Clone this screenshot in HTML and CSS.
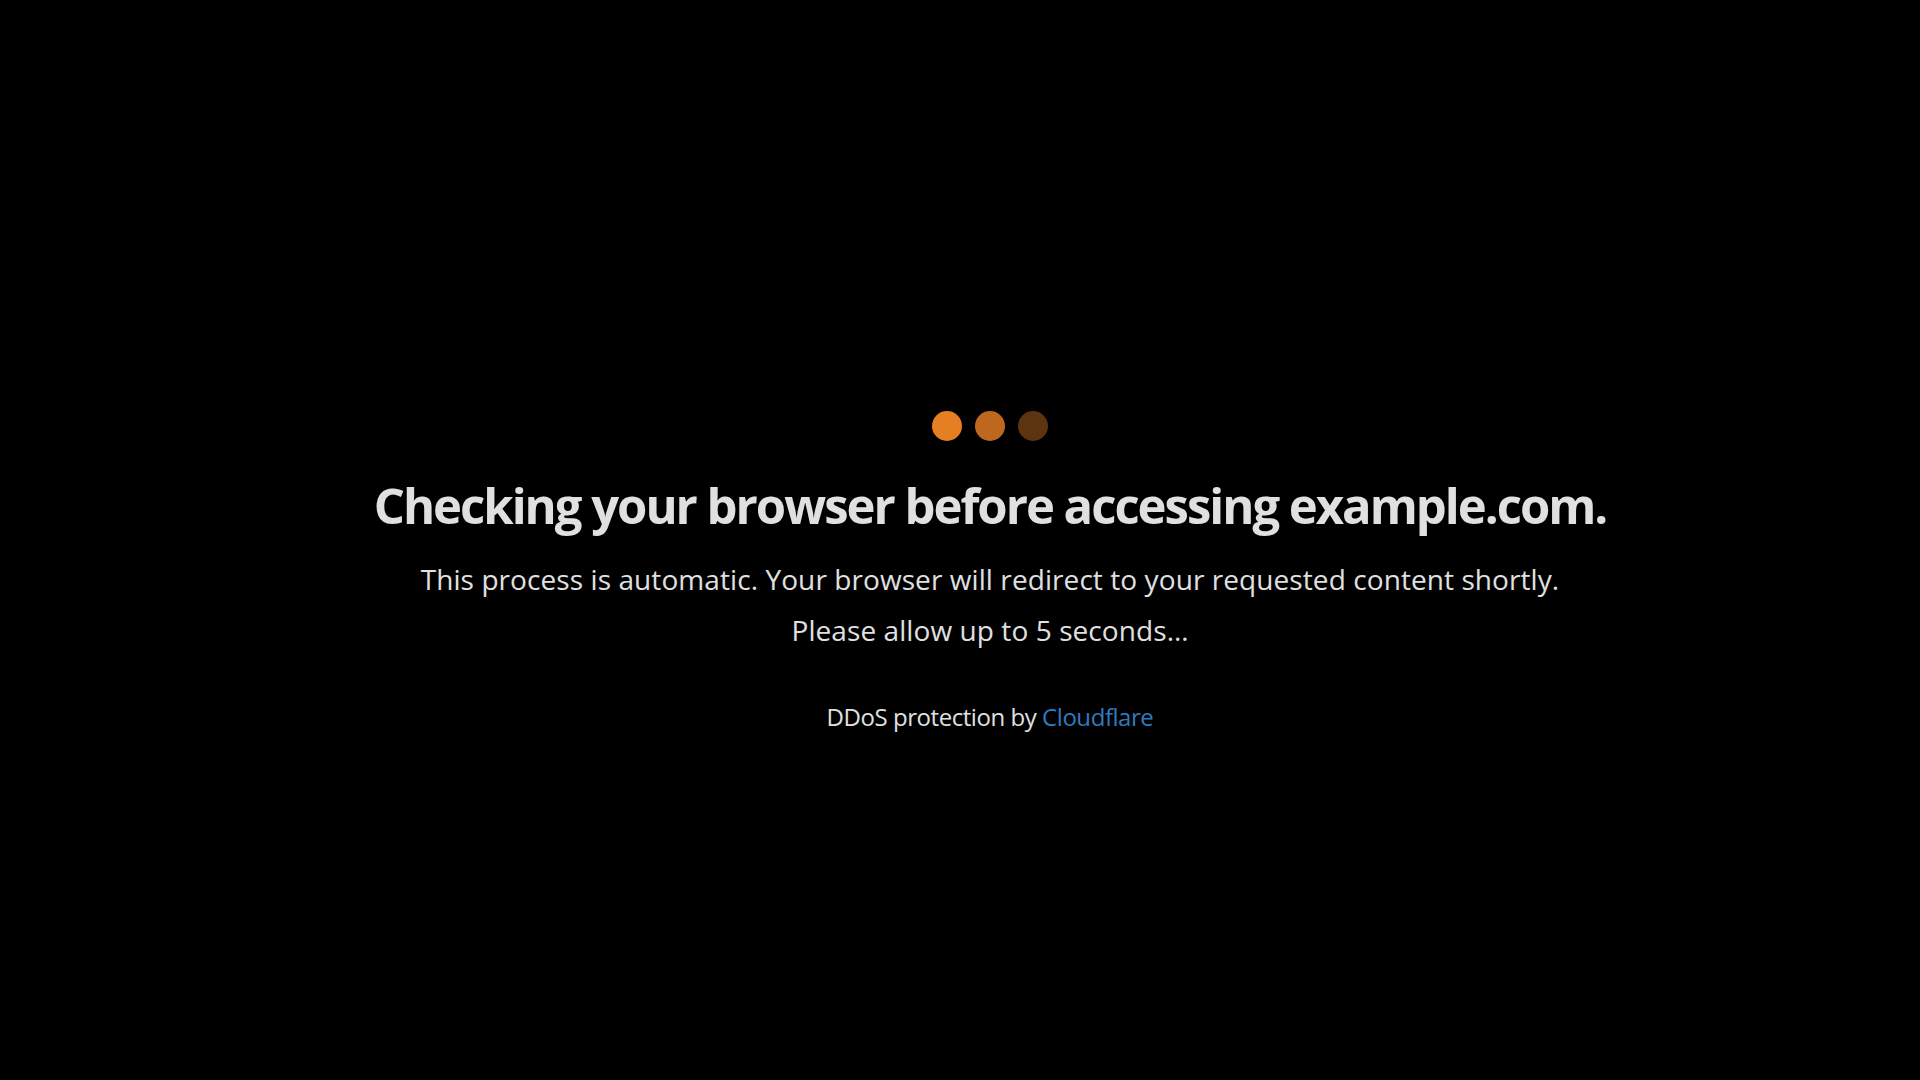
FILE: index.html
```html
<!DOCTYPE html>
<html lang="en">
<head>
<meta charset="utf-8">
<title>Just a moment...</title>
<link rel="stylesheet" href="styles.css">
</head>
<body>
<main class="page">
  <div class="dots">
    <span class="dot dot-1"></span>
    <span class="dot dot-2"></span>
    <span class="dot dot-3"></span>
  </div>
  <h1 class="title">Checking your browser before accessing example.com.</h1>
  <div class="message">
    <p class="line">This process is automatic. Your browser will redirect to your requested content shortly.</p>
    <p class="line">Please allow up to 5 seconds&hellip;</p>
  </div>
  <p class="footer">DDoS protection by <a class="link" href="#">Cloudflare</a></p>
</main>
</body>
</html>
```
FILE: styles.css
```css
html, body {
  margin: 0;
  padding: 0;
  background: #000;
}
body {
  width: 1920px;
  height: 1080px;
  overflow: hidden;
  font-family: "Open Sans", "Noto Sans", sans-serif;
  color: #e0e0e0;
}
.page {
  display: flex;
  flex-direction: column;
  align-items: center;
  padding-top: 411px;
  padding-left: 60px;
}
.dots {
  display: flex;
  gap: 13px;
  height: 30px;
}
.dot {
  width: 30px;
  height: 30px;
  border-radius: 50%;
}
.dot-1 { background: #e67f22; }
.dot-2 { background: #be671e; }
.dot-3 { background: #5d3410; }
.title {
  margin: 34px 0 0;
  font-size: 49px;
  line-height: 60px;
  font-weight: 700;
  letter-spacing: -2px;
  color: #e0e0e0;
}
.message {
  margin-top: 19px;
  text-align: center;
}
.line {
  margin: 0;
  font-size: 28px;
  line-height: 51px;
  letter-spacing: 0.08px;
}
.footer {
  margin: 46px 0 0;
  font-size: 24px;
  line-height: 30px;
  letter-spacing: -0.45px;
}
.link {
  color: #2f7bbf;
  text-decoration: none;
}
```
